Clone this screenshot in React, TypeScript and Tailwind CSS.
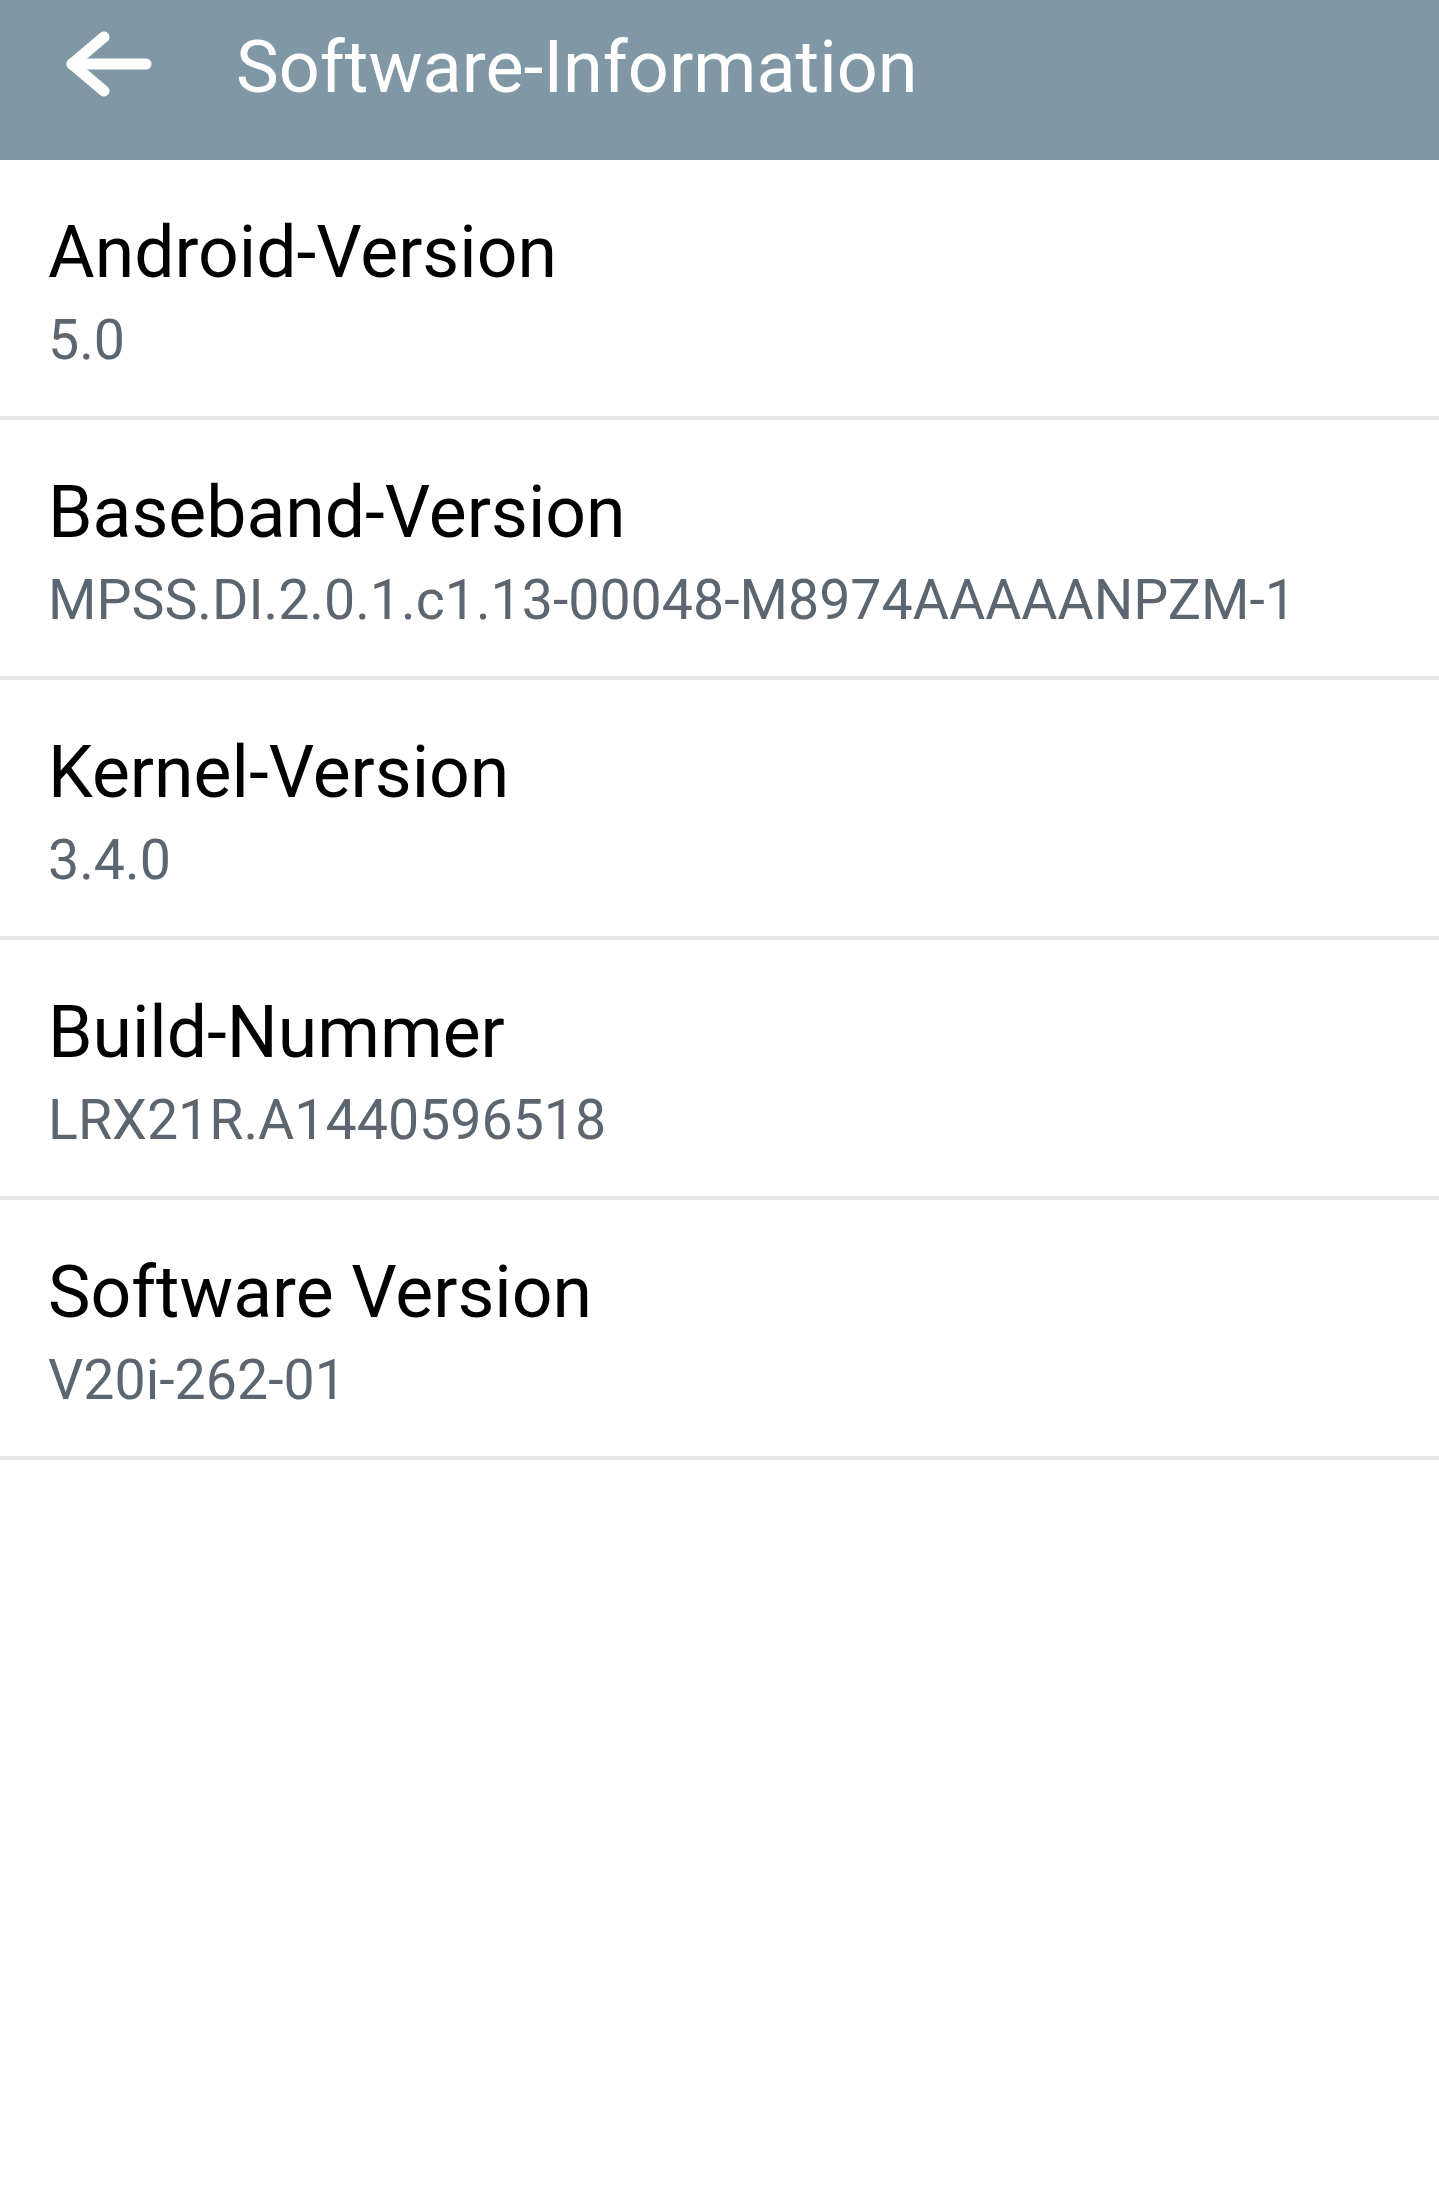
import React from "react";

function InfoRow({ title, value }: { title: string; value: string }) {
  return (
    <div className="h-[260px] border-b-4 border-[#e6e6e6] pl-[48px] pt-[57px]">
      <div className="text-[71.5px] leading-none text-black">{title}</div>
      <div className="mt-[24px] text-[55.5px] leading-none text-[#5b6670]">
        {value}
      </div>
    </div>
  );
}

export default function App() {
  const rows = [
    { title: "Android-Version", value: "5.0" },
    { title: "Baseband-Version", value: "MPSS.DI.2.0.1.c1.13-00048-M8974AAAAANPZM-1" },
    { title: "Kernel-Version", value: "3.4.0" },
    { title: "Build-Nummer", value: "LRX21R.A1440596518" },
    { title: "Software Version", value: "V20i-262-01" },
  ];
  return (
    <div
      className="min-h-screen bg-white"
      style={{ fontFamily: "Roboto, 'Noto Sans', sans-serif" }}
    >
      <div className="flex h-[160px] items-start bg-[#8097a5]">
        <svg
          className="ml-[66px] mt-[27px]"
          width="92"
          height="76"
          viewBox="0 0 92 76"
          fill="none"
          stroke="white"
          strokeWidth="11"
          strokeLinecap="round"
          strokeLinejoin="round"
        >
          <path d="M6 37H80" />
          <path d="M38 10L6 37L38 64" />
        </svg>
        <div className="ml-[78px] mt-[32px] text-[72px] leading-none text-white">
          Software-Information
        </div>
      </div>
      {rows.map((row, index) => (
        <InfoRow key={index} title={row.title} value={row.value} />
      ))}
    </div>
  );
}
